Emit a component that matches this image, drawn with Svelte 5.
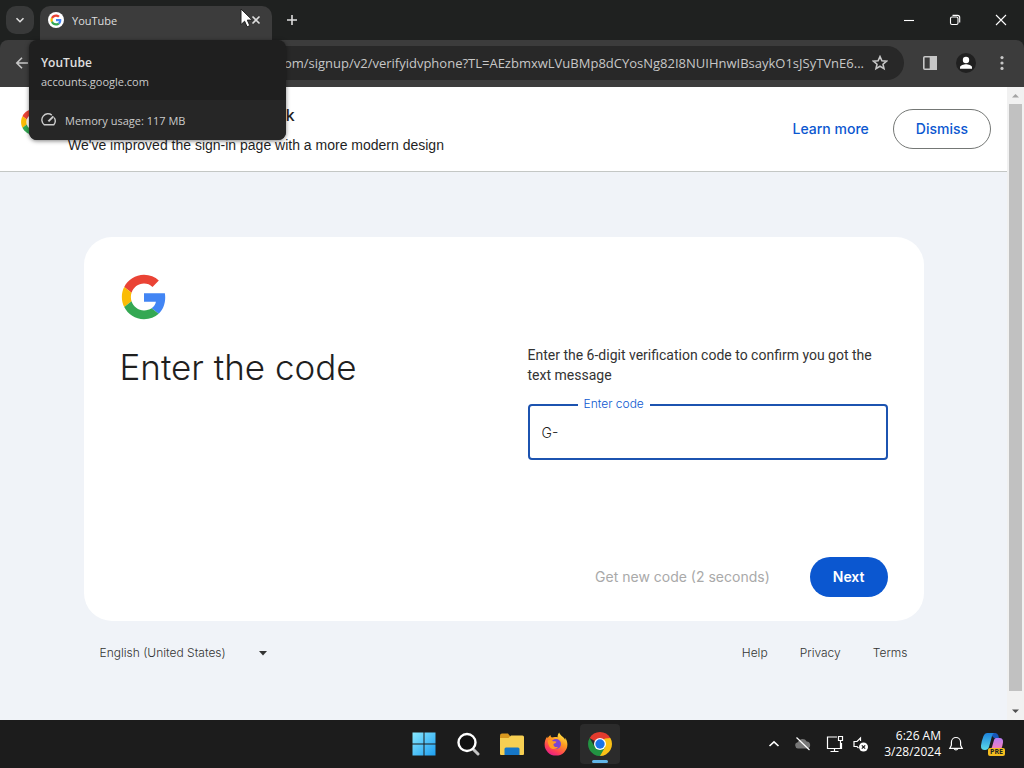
<script lang="ts">
  const url =
    'accounts.google.com/signup/v2/verifyidvphone?TL=AEzbmxwLVuBMp8dCYosNg82I8NUIHnwIBsaykO1sJSyTVnE6...'

  let code = $state('G-')
  let language = $state('en-US')
</script>

{#snippet googleLogo()}
  <svg class="google-logo" viewBox="-2 -2 52 52" aria-hidden="true">
    <path fill="#ea4335" d="M24 9.5c3.54 0 6.71 1.22 9.21 3.6l6.85-6.85C35.9 2.38 30.47 0 24 0 14.62 0 6.51 5.38 2.56 13.22l7.98 6.19C12.43 13.72 17.74 9.5 24 9.5z" />
    <path fill="#4285f4" d="M46.98 24.55c0-1.57-.15-3.09-.38-4.55H24v9.02h12.94c-.58 2.96-2.26 5.48-4.78 7.18l7.73 6c4.51-4.18 7.09-10.36 7.09-17.65z" />
    <path fill="#fbbc05" d="M10.53 28.59c-.48-1.45-.76-2.99-.76-4.59s.27-3.14.76-4.59l-7.98-6.19C.92 16.46 0 20.12 0 24c0 3.88.92 7.54 2.56 10.78l7.97-6.19z" />
    <path fill="#34a853" d="M24 48c6.48 0 11.93-2.13 15.89-5.81l-7.73-6c-2.15 1.45-4.92 2.3-8.16 2.3-6.26 0-11.57-4.22-13.47-9.91l-7.98 6.19C6.51 42.62 14.62 48 24 48z" />
  </svg>
{/snippet}

<div class="desktop">
  <header class="tab-strip">
    <button class="tab-search" aria-label="Search tabs">
      <svg width="12" height="12" viewBox="0 0 12 12"><path d="M2.5 4.2 6 7.7l3.5-3.5" /></svg>
    </button>
    <div class="tab">
      <span class="favicon">{@render googleLogo()}</span>
      <span class="tab-title">YouTube</span>
      <button class="tab-close" aria-label="Close tab">
        <svg width="10" height="10" viewBox="0 0 10 10"><path d="m1.5 1.5 7 7m0-7-7 7" /></svg>
      </button>

      <div class="hover-card">
        <div class="hover-main">
          <strong>YouTube</strong>
          <span>accounts.google.com</span>
        </div>
        <div class="hover-memory">
          <svg width="16" height="16" viewBox="0 0 16 16">
            <path d="M10.8 3.1A6 6 0 0 0 3.2 12.7h9.6A6 6 0 0 0 13.2 5.6" />
            <path d="m7.4 9.4 5-5" stroke-width="2" />
          </svg>
          <span>Memory usage: 117 MB</span>
        </div>
      </div>

      <svg class="cursor" width="14" height="20" viewBox="0 0 14 20" aria-hidden="true">
        <path d="M1 1v15.6l3.6-3.4 2.5 5.6 2.7-1.2-2.5-5.5h5z" />
      </svg>
    </div>
    <button class="new-tab" aria-label="New tab">
      <svg width="12" height="12" viewBox="0 0 12 12"><path d="M6 1v10M1 6h10" /></svg>
    </button>
    <div class="window-controls">
      <button aria-label="Minimize">
        <svg width="12" height="12" viewBox="0 0 12 12"><path d="M1 6.5h10" /></svg>
      </button>
      <button aria-label="Restore">
        <svg width="12" height="12" viewBox="0 0 12 12">
          <rect x="1.5" y="3" width="7.5" height="7.5" rx="1.5" />
          <path d="M3.5 1.4h5a2.2 2.2 0 0 1 2.2 2.2v5" />
        </svg>
      </button>
      <button aria-label="Close">
        <svg width="12" height="12" viewBox="0 0 12 12"><path d="m1 1 10 10M11 1 1 11" /></svg>
      </button>
    </div>
  </header>

  <div class="toolbar">
    <button class="tool" aria-label="Back">
      <svg width="16" height="16" viewBox="0 0 16 16"><path d="M14 8H3m5-5.2L2.8 8 8 13.2" /></svg>
    </button>
    <button class="tool" aria-label="Forward">
      <svg width="16" height="16" viewBox="0 0 16 16"><path d="M2 8h11M8 2.8 13.2 8 8 13.2" /></svg>
    </button>
    <div class="omnibox">
      <input type="text" value={url} aria-label="Address and search bar" readonly />
      <button class="star" aria-label="Bookmark this tab">
        <svg width="16" height="16" viewBox="0 0 16 16">
          <path d="m8 1.6 1.9 4.2 4.6.4L11 9.2l1 4.5-4-2.4-4 2.4 1-4.5-3.5-3 4.6-.4z" />
        </svg>
      </button>
    </div>
    <button class="tool" aria-label="Side panel">
      <svg width="16" height="16" viewBox="0 0 16 16">
        <rect x="1.8" y="1.8" width="12.4" height="12.4" rx="1" />
        <path d="M8.5 1.8h5.7v12.4H8.5z" fill="#c7c7c7" />
      </svg>
    </button>
    <button class="tool" aria-label="Profile">
      <svg width="20" height="20" viewBox="0 0 20 20">
        <circle cx="10" cy="10" r="10" fill="#202020" stroke="none" />
        <circle cx="10" cy="7" r="3.2" fill="#fff" stroke="none" />
        <path d="M4 15.8v-1.6c0-2 4-3 6-3s6 1 6 3v1.6z" fill="#fff" stroke="none" />
      </svg>
    </button>
    <button class="tool" aria-label="Menu">
      <svg width="16" height="16" viewBox="0 0 16 16">
        <g fill="#c7c7c7" stroke="none">
          <circle cx="8" cy="2.6" r="1.6" />
          <circle cx="8" cy="8" r="1.6" />
          <circle cx="8" cy="13.4" r="1.6" />
        </g>
      </svg>
    </button>
  </div>

  <div class="viewport">
    <div class="page">
      <section class="banner">
        <span class="banner-logo">{@render googleLogo()}</span>
        <div class="banner-text">
          <h2>Google sign in has a new look</h2>
          <p>We've improved the sign-in page with a more modern design</p>
        </div>
        <a class="learn-more" href="#learn-more">Learn more</a>
        <button class="dismiss">Dismiss</button>
      </section>

      <div class="content">
        <main class="card">
          <div class="intro">
            <span class="card-logo">{@render googleLogo()}</span>
            <h1>Enter the code</h1>
          </div>
          <form class="form" onsubmit={(e) => e.preventDefault()}>
            <p>Enter the 6-digit verification code to confirm you got the text message</p>
            <div class="field">
              <label for="code">Enter code</label>
              <input id="code" type="text" bind:value={code} />
            </div>
            <div class="actions">
              <button type="button" class="resend" disabled>Get new code (2 seconds)</button>
              <button type="submit" class="next">Next</button>
            </div>
          </form>
        </main>

        <footer class="footer">
          <div class="language">
            <select bind:value={language} aria-label="Language">
              <option value="en-US">English (United States)</option>
            </select>
            <svg width="10" height="5" viewBox="0 0 10 5" aria-hidden="true"><path d="M1 0h8L5 4.5z" /></svg>
          </div>
          <nav>
            <a href="#help">Help</a>
            <a href="#privacy">Privacy</a>
            <a href="#terms">Terms</a>
          </nav>
        </footer>
      </div>
    </div>

    <div class="scrollbar" aria-hidden="true">
      <svg width="17" height="17" viewBox="0 0 17 17"><path d="M5 10.5h7L8.5 7z" fill="#a3a3a3" /></svg>
      <div class="thumb"></div>
      <svg width="17" height="17" viewBox="0 0 17 17"><path d="M5 6.5h7L8.5 10z" fill="#505050" /></svg>
    </div>
  </div>

  <div class="taskbar">
    <div class="apps">
      <button aria-label="Start">
        <svg width="24" height="24" viewBox="0 0 24 24">
          <defs>
            <linearGradient id="win" gradientUnits="userSpaceOnUse" x1="0" y1="0" x2="24" y2="24">
              <stop offset="0" stop-color="#8aeaff" />
              <stop offset="1" stop-color="#1a9cf0" />
            </linearGradient>
          </defs>
          <path fill="url(#win)" d="M.5.5h11v11H.5zM12.5.5h11v11h-11zM.5 12.5h11v11H.5zM12.5 12.5h11v11h-11z" />
        </svg>
      </button>
      <button aria-label="Search">
        <svg width="24" height="24" viewBox="0 0 24 24" fill="none" stroke-linecap="round">
          <path d="m17.5 17.5 4.5 4.5" stroke="#c4c4c4" stroke-width="3" />
          <circle cx="11" cy="10.5" r="8.5" fill="#101010" stroke="#fff" stroke-width="2.4" />
        </svg>
      </button>
      <button aria-label="File Explorer">
        <svg width="26" height="24" viewBox="0 0 26 24">
          <path fill="#d9981e" d="M1 3.5Q1 1.5 3 1.5h6l2 2.5v4H1z" />
          <path fill="#f7cf52" d="M1 6h8.5L12 3.5h11.5Q25 3.5 25 5v17q0 1-1 1H2q-1 0-1-1z" />
          <path fill="#1677c8" d="M5.5 23v-6q0-1.500 1.500-1.500h12q1.500 0 1.500 1.500v6z" />
        </svg>
      </button>
      <button aria-label="Firefox">
        <svg width="24" height="24" viewBox="0 0 24 24">
          <defs>
            <linearGradient id="fox" x1=".8" y1="0" x2=".25" y2="1">
              <stop offset="0" stop-color="#fff04a" />
              <stop offset=".4" stop-color="#ff9a1f" />
              <stop offset=".75" stop-color="#ff4254" />
              <stop offset="1" stop-color="#e21a8f" />
            </linearGradient>
          </defs>
          <path fill="url(#fox)" d="M15.2.5c-1.4 1.7-1.7 3.500-1.600 4.800-1.600-.5-4-.6-5.700.2C6.800 5 6.500 4 6.500 3 5.300 3.700 4.300 5 3.800 6.300 3.400 5.700 3.300 5 3.300 4.400 1.400 6.700.6 9.600.6 12.600a11.400 11 0 0 0 22.800 0c0-2.500-.8-5-2.200-6.800.1.9.1 1.600 0 2.200C19.800 4.600 16.200 3.800 15.200.5z" />
          <circle cx="12" cy="12" r="5" fill="#7a44d2" />
          <path fill="#ff9b22" d="M3.800 8.400c2-.9 4-.4 5.100.8 1.300 0 2.700.1 3.600.6-.4 1.300-1.900 1.700-3 2.100-.4 2.300 2 3.900 4.500 2.900-1.500 3-6.700 3.100-8.700-.4-1-1.900-1.600-4-1.500-6z" />
        </svg>
      </button>
      <button class="active" aria-label="Google Chrome">
        <svg width="24" height="24" viewBox="0 0 24 24">
          <path fill="#e33b2e" d="M12 12 1.610 6A12 12 0 0 1 22.390 6z" />
          <path fill="#fbc116" d="M12 12 17.200 6h5.190A12 12 0 0 1 12 24z" />
          <path fill="#229342" d="M1.610 6A12 12 0 0 0 12 24l5.200-9L12 12l-5.200 3z" />
          <path fill="#e33b2e" d="M12 6h10.390L12 7z" />
          <circle cx="12" cy="12" r="6" fill="#fff" />
          <circle cx="12" cy="12" r="4.700" fill="#1a73e8" />
        </svg>
      </button>
    </div>

    <div class="tray">
      <button aria-label="Show hidden icons">
        <svg width="12" height="12" viewBox="0 0 12 12"><path d="M1.5 8 6 3.8 10.5 8" stroke-width="1.6" /></svg>
      </button>
      <button aria-label="OneDrive">
        <svg width="18" height="16" viewBox="0 0 18 16">
          <path d="M4 12.5a3.2 3.2 0 0 1-.3-6.3 5 5 0 0 1 9-.8 3.7 3.7 0 0 1 1.2 7.1z" fill="#777" stroke="none" />
          <path d="m2.5 1.5 13 12.5" />
        </svg>
      </button>
      <button class="quick" aria-label="Network and volume">
        <svg width="18" height="18" viewBox="0 0 18 18">
          <path d="M11 2H1.5v11.5h14V8M8.5 13.5v3M4.5 16.5h8" />
          <path d="M12.5 1.5h4v4h-4zM14.5 5.5v8" />
        </svg>
        <svg width="18" height="18" viewBox="0 0 18 18">
          <path d="M8.5 6V3L5 6.5H2v5h3l1.5 1.5" />
          <circle cx="11.5" cy="12" r="4.5" fill="#fff" stroke="none" />
          <path d="m9.8 10.3 3.4 3.4m0-3.4-3.4 3.4" stroke="#1c1c1c" />
        </svg>
      </button>
      <button class="clock">
        <span>6:26 AM</span>
        <span>3/28/2024</span>
      </button>
      <button aria-label="Notifications">
        <svg width="16" height="16" viewBox="0 0 16 16">
          <path d="M8 1.5A4.6 4.6 0 0 0 3.4 6v3.2l-1.6 3.2h12.4l-1.6-3.2V6A4.6 4.6 0 0 0 8 1.5zM6.2 12.6a1.9 1.9 0 0 0 3.6 0" />
        </svg>
      </button>
      <button class="copilot" aria-label="Copilot">
        <svg width="24" height="24" viewBox="0 0 24 24">
          <defs>
            <linearGradient id="pilot" x1="0" y1="0" x2="0" y2="1">
              <stop offset="0" stop-color="#1c83dc" />
              <stop offset="1" stop-color="#5bd8e8" />
            </linearGradient>
            <linearGradient id="pilot-pink" x1="0" y1="0" x2="0" y2="1">
              <stop offset="0" stop-color="#b77df5" />
              <stop offset="1" stop-color="#fb7fb4" />
            </linearGradient>
          </defs>
          <path fill="#1756b8" d="M9 1h6.500q2 0 2.800 2.500L19 6h-5z" />
          <path fill="url(#pilot)" d="M7 1h7q-1.500 1-2 3L9 15q-1 3-4 3-4.500 0-4-4.500Q1.500 9 3.500 4 4.700 1 7 1z" />
          <path fill="url(#pilot-pink)" d="M16 6h3.500q4 0 3.500 4.500-.5 4-2 7.500H9.500q2-1 2.500-3l2-7q.5-2 2-2z" />
        </svg>
        <span class="badge">PRE</span>
      </button>
    </div>
  </div>
</div>

<style>
  :global(body) {
    margin: 0;
  }

  .desktop {
    display: flex;
    flex-direction: column;
    min-height: 100vh;
    font-family: 'Open Sans', 'Noto Sans', sans-serif;
    background: #1f2120;
  }

  button,
  input,
  select {
    margin: 0;
    padding: 0;
    border: 0;
    background: none;
    font: inherit;
    color: inherit;
  }

  button svg {
    display: block;
  }

  h1,
  h2,
  p {
    margin: 0;
  }

  a {
    color: inherit;
    text-decoration: none;
  }

  .google-logo {
    display: block;
    width: 100%;
    height: 100%;
  }

  /* tab strip */
  .tab-strip {
    display: flex;
    align-items: center;
    height: 40px;
    padding-left: 6px;
    color: #dedede;
  }

  .tab-strip svg,
  .toolbar svg {
    fill: none;
    stroke: currentColor;
    stroke-width: 1.6;
  }

  .tab-search {
    display: grid;
    place-items: center;
    width: 28px;
    height: 28px;
    border-radius: 10px;
    background: #383939;
  }

  .tab {
    position: relative;
    display: flex;
    align-items: center;
    gap: 8px;
    box-sizing: border-box;
    width: 232px;
    height: 34px;
    margin: 6px 0 0 6px;
    padding: 0 10px 6px 8px;
    border-radius: 10px 10px 0 0;
    background: #3c3c3c;
    font-size: 11px;
  }

  .favicon {
    width: 12px;
    height: 12px;
    padding: 2px;
    border-radius: 50%;
    background: #fff;
  }

  .favicon .google-logo {
    stroke: none;
  }

  .tab-title {
    flex: 1;
  }

  .tab-close {
    width: 10px;
    height: 10px;
    margin-right: 1px;
  }

  .new-tab {
    display: grid;
    place-items: center;
    width: 28px;
    height: 28px;
    margin-left: 6px;
  }

  .window-controls {
    display: flex;
    align-self: stretch;
    margin-left: auto;
    color: #fff;
  }

  .window-controls button {
    display: grid;
    place-items: center;
    width: 46px;
  }

  .window-controls svg {
    stroke-width: 1.1;
  }

  .cursor {
    position: absolute;
    z-index: 3;
    top: 2px;
    left: 200px;
  }

  .tab-strip .cursor {
    fill: #fff;
    stroke: #222;
    stroke-width: 1;
  }

  .hover-card {
    position: absolute;
    z-index: 2;
    top: 34px;
    left: -11px;
    width: 257px;
    border-radius: 8px;
    background: #1f1f1f;
    box-shadow: 0 1px 4px rgb(0 0 0 / 50%);
    overflow: hidden;
    color: #e0e0e0;
  }

  .hover-main {
    display: flex;
    flex-direction: column;
    padding: 13px 12px 9px;
    line-height: 19px;
  }

  .hover-main strong {
    font-size: 12px;
    font-weight: 600;
  }

  .hover-main span {
    color: #cbcbcb;
  }

  .hover-memory {
    display: flex;
    align-items: center;
    gap: 8px;
    height: 40px;
    padding: 0 12px;
    background: #262626;
    color: #cbcbcb;
  }

  .tab-strip .hover-memory svg {
    stroke-width: 1.4;
  }

  /* toolbar */
  .toolbar {
    display: flex;
    align-items: center;
    height: 47px;
    padding: 0 4px 1px;
    box-sizing: border-box;
    border-radius: 8px 8px 0 0;
    background: #3c3c3c;
    color: #c7c7c7;
  }

  .tool {
    display: grid;
    place-items: center;
    width: 36px;
    height: 34px;
  }

  .omnibox {
    display: flex;
    flex: 1;
    align-items: center;
    gap: 8px;
    height: 34px;
    margin: 0 8px;
    padding: 0 16px;
    border-radius: 17px;
    background: #282828;
  }

  .omnibox input {
    flex: 1;
    min-width: 0;
    outline: 0;
    font-size: 13px;
    line-height: 20px;
    text-align: right;
  }

  /* page */
  .viewport {
    display: flex;
    flex: 1;
  }

  .page {
    display: flex;
    flex: 1;
    flex-direction: column;
    min-width: 0;
    background: #f0f3f8;
    font-family: Inter, Roboto, sans-serif;
    font-weight: 300;
    color: #1f1f1f;
  }

  .banner {
    display: flex;
    align-items: center;
    height: 84px;
    padding: 0 16px 0 20px;
    border-bottom: 1px solid #c4c7c5;
    background: #fff;
  }

  .banner-logo {
    width: 28px;
    height: 28px;
    margin: 0 20px 14px 0;
  }

  .banner-text {
    display: flex;
    flex: 1;
    flex-direction: column;
    gap: 8px;
  }

  .banner-text h2 {
    font-size: 16px;
    font-weight: 500;
    line-height: 24px;
  }

  .banner-text p {
    font-family: 'Liberation Sans', Arial, sans-serif;
    font-size: 14px;
    line-height: 20px;
  }

  .learn-more,
  .dismiss,
  .next {
    font-size: 14px;
    font-weight: 500;
    line-height: 20px;
  }

  .learn-more {
    margin-right: 24px;
    color: #0b57d0;
  }

  .dismiss {
    height: 40px;
    padding: 0 22px;
    border: 1px solid #747775;
    border-radius: 20px;
    color: #0b57d0;
  }

  .content {
    display: flex;
    flex: 1;
    flex-direction: column;
    justify-content: center;
    width: 100%;
    max-width: 840px;
    margin: 0 auto;
    padding-top: 6px;
  }

  .card {
    display: grid;
    grid-template-columns: 1fr 1fr;
    gap: 48px;
    padding: 36px 36px 24px;
    border-radius: 28px;
    background: #fff;
  }

  .card-logo {
    display: block;
    width: 48px;
    height: 48px;
  }

  h1 {
    margin-top: 24px;
    font-size: 35px;
    font-weight: 300;
    line-height: 44px;
  }

  .form {
    padding-top: 72px;
    font-size: 14px;
    line-height: 20px;
  }

  .form p {
    font-family: Roboto, sans-serif;
    font-weight: 400;
    color: #333;
  }

  .field {
    position: relative;
    margin-top: 19px;
  }

  .field label {
    position: absolute;
    top: -8px;
    left: 50px;
    padding: 0 6px;
    background: #fff;
    color: #0b57d0;
    font-size: 12px;
    line-height: 16px;
  }

  .field input {
    display: block;
    box-sizing: border-box;
    width: 100%;
    height: 56px;
    padding: 0 12px;
    border: 2px solid #1c53b0;
    border-radius: 4px;
    outline: 0;
  }

  .actions {
    display: flex;
    justify-content: flex-end;
    gap: 24px;
    margin-top: 97px;
  }

  .resend {
    padding: 0 16px;
    color: #a9a9a9;
    font-weight: 400;
  }

  .next {
    height: 40px;
    padding: 0 23px;
    border-radius: 20px;
    background: #0b57d0;
    color: #fff;
    font-weight: 600;
  }

  .footer {
    display: flex;
    align-items: center;
    justify-content: space-between;
    padding: 24px 16px 0;
    font-size: 12px;
    line-height: 16px;
    color: #333;
  }

  .language {
    display: flex;
    align-items: center;
  }

  .language select {
    width: 168px;
    appearance: none;
  }

  .language svg {
    margin-left: -10px;
    fill: #333;
    pointer-events: none;
  }

  .footer nav {
    display: flex;
    gap: 32px;
  }

  .scrollbar {
    display: flex;
    flex-direction: column;
    width: 17px;
    background: #f1f1f1;
  }

  .thumb {
    flex: 1;
    margin: 0 2px 12px;
    background: #c1c1c1;
  }

  /* taskbar */
  .taskbar {
    display: grid;
    grid-template-columns: 1fr auto 1fr;
    align-items: center;
    height: 48px;
    background: #1c1c1c;
    color: #fff;
  }

  .apps {
    grid-column: 2;
    display: flex;
    gap: 4px;
  }

  .apps button {
    display: grid;
    place-items: center;
    width: 40px;
    height: 40px;
    border-radius: 4px;
  }

  .apps .active {
    position: relative;
    background: #2b2b2b;
  }

  .apps .active::after {
    content: '';
    position: absolute;
    bottom: 1px;
    left: 12px;
    width: 16px;
    height: 3px;
    border-radius: 2px;
    background: #62b6e8;
  }

  .tray {
    display: flex;
    align-items: center;
    justify-content: flex-end;
    padding-right: 20px;
  }

  .tray button > svg {
    fill: none;
    stroke: #fff;
    stroke-width: 1.2;
  }

  .tray button {
    padding: 0 7px;
  }

  .tray .quick {
    display: flex;
    gap: 8px;
  }

  .tray .clock {
    display: flex;
    flex-direction: column;
    align-items: flex-end;
    padding-right: 0;
    font-size: 12px;
    line-height: 16px;
  }

  .tray .copilot {
    position: relative;
    padding: 0 0 0 9px;
  }

  .tray .copilot svg {
    stroke: none;
  }

  .badge {
    position: absolute;
    right: -1px;
    bottom: 0;
    padding: 0 2px;
    border-radius: 2px;
    background: #f5bd1f;
    color: #222;
    font-size: 7px;
    font-weight: 700;
    line-height: 8px;
  }
</style>
